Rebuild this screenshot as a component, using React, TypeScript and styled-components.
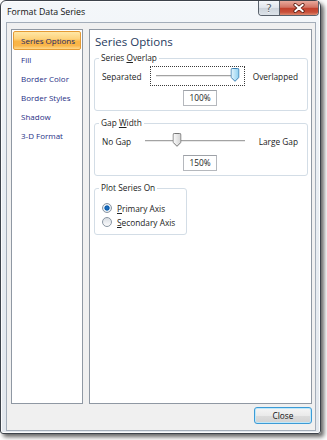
import React from "react";
import styled, { createGlobalStyle } from "styled-components";

const Global = createGlobalStyle`
  html, body { margin: 0; padding: 0; background: #fdfdfd; }
  body { width: 327px; height: 440px; overflow: hidden; font-family: "Open Sans", "Noto Sans", sans-serif; }
  #root { width: 327px; height: 440px; }
  * { box-sizing: border-box; }
`;

const Stage = styled.div`
  width: 327px;
  height: 440px;
  background: #fdfdfd;
`;

const Win = styled.div`
  width: 321px;
  height: 434px;
  border: 1px solid #3d434b;
  border-radius: 6px 6px 3px 3px;
  background: linear-gradient(180deg, #f4f7fa 0%, #e9eef3 40%, #e3e8ee 100%);
  box-shadow: 3px 3px 4px rgba(0, 0, 0, 0.6), inset 0 0 0 1px rgba(255, 255, 255, 0.85);
  display: flex;
  flex-direction: column;
  padding: 0 4px 2px 5px;
`;

const TitleBar = styled.div`
  height: 21px;
  margin: 0 -3px 0 -5px;
  padding-left: 6px;
  display: flex;
  align-items: flex-start;
`;

const Title = styled.div`
  flex: 1;
  font-size: 8.8px;
  line-height: 22px;
  color: #111;
`;

const CaptionGroup = styled.div`
  display: flex;
  height: 15px;
  border: 1px solid #59616b;
  border-top: none;
  border-radius: 0 0 4px 4px;
  overflow: hidden;
`;

const HelpBtn = styled.div`
  width: 21px;
  display: flex;
  align-items: center;
  justify-content: center;
  border-right: 1px solid #59616b;
  background: linear-gradient(180deg, #f4f6f9 0%, #dfe4ea 50%, #ccd3db 51%, #dde3e9 100%);
  color: #5b626b;
  font-size: 11px;
  font-family: "DejaVu Sans", sans-serif;
  line-height: 1;
  text-shadow: 0 1px 0 #fff;
`;

const CloseCap = styled.div`
  width: 38px;
  display: flex;
  align-items: center;
  justify-content: center;
  background: linear-gradient(180deg, #e9a99c 0%, #d27464 45%, #c2412d 52%, #c9503a 80%, #dc8a70 100%);
`;

const Client = styled.div`
  flex: 1;
  min-height: 0;
  border: 1px solid #a3adb9;
  background: #f0f0f0;
  display: flex;
  flex-direction: column;
  padding: 6px 3px 6px 4px;
`;

const Main = styled.div`
  flex: 1;
  min-height: 0;
  display: flex;
  gap: 6px;
`;

const Nav = styled.div`
  width: 72px;
  border: 1px solid #8f98a3;
  background: #fff;
  padding: 1px;
  display: flex;
  flex-direction: column;
`;

const NavItem = styled.div<{ $selected?: boolean }>`
  height: 19px;
  padding-left: 7px;
  display: flex;
  align-items: center;
  font-size: 8px;
  white-space: nowrap;
  color: ${(p) => (p.$selected ? "#1b2a66" : "#1f2f86")};
  border: 1px solid ${(p) => (p.$selected ? "#e59b34" : "transparent")};
  border-radius: 2px;
  background: ${(p) =>
    p.$selected
      ? "linear-gradient(180deg, #ffe7a6 0%, #fdd27c 40%, #fab545 55%, #f9b54a 80%, #fed98a 100%)"
      : "transparent"};
`;

const Panel = styled.div`
  flex: 1;
  border: 1px solid #8f98a3;
  background: #fff;
  padding: 4px 3px 0 4px;
  display: flex;
  flex-direction: column;
  align-items: flex-start;
`;

const Heading = styled.div`
  font-size: 11.5px;
  line-height: 16px;
  color: #1f3a5e;
  padding-left: 1px;
  margin-bottom: 2px;
`;

const Group = styled.fieldset<{ $width?: number; $padTop: number; $padBottom: number }>`
  margin: 0 0 6px 0;
  padding: ${(p) => p.$padTop}px 9px ${(p) => p.$padBottom}px 7px;
  border: 1px solid #d3dde6;
  border-radius: 3px;
  min-width: 0;
  width: ${(p) => (p.$width ? `${p.$width}px` : "100%")};
  display: flex;
  flex-direction: column;
`;

const Legend = styled.legend`
  font-size: 8.3px;
  line-height: 12px;
  padding: 0 2px;
  margin-left: -3px;
  color: #222;
`;

const SliderRow = styled.div`
  height: 20px;
  display: flex;
  align-items: center;
  gap: 8px;
`;

const SliderLabel = styled.span`
  font-size: 8.3px;
  color: #222;
  white-space: nowrap;
`;

const Slider = styled.div<{ $focused?: boolean }>`
  flex: 1;
  height: 20px;
  padding: 0 5px;
  display: flex;
  align-items: center;
  border: 1px ${(p) => (p.$focused ? "dotted #3a3a3a" : "solid transparent")};
`;

const Track = styled.div`
  position: relative;
  flex: 1;
  height: 2px;
  border-top: 1px solid #a3a3a3;
  border-bottom: 1px solid #e8e8e8;
`;

const ThumbLane = styled.div`
  position: absolute;
  left: 4px;
  right: 4px;
  top: -8px;
  height: 14px;
`;

const ThumbWrap = styled.div`
  position: absolute;
  top: 0;
  width: 9px;
  height: 14px;
  transform: translateX(-50%);
  display: flex;
`;

const ValueBox = styled.div`
  align-self: center;
  margin-top: 4px;
  width: 34px;
  height: 16px;
  border: 1px solid #b5b8bd;
  border-top-color: #9da1a7;
  background: #fff;
  font-size: 8.3px;
  line-height: 14px;
  text-align: center;
  color: #222;
`;

const RadioRow = styled.label`
  height: 14px;
  display: flex;
  align-items: center;
  gap: 5px;
  font-size: 8.3px;
  color: #222;
  white-space: nowrap;
`;

const RadioDot = styled.span<{ $checked?: boolean }>`
  width: 10px;
  height: 10px;
  border-radius: 50%;
  border: 1px solid #8a96a3;
  background: ${(p) =>
    p.$checked
      ? "radial-gradient(circle at 50% 50%, #1f73c4 0, #0e5aa8 2.2px, #6aa7dc 2.6px, #eef1f4 3px, #d6dbe1 100%)"
      : "linear-gradient(180deg, #d9dde2 0%, #eef0f3 60%, #fafafa 100%)"};
`;

const ButtonRow = styled.div`
  display: flex;
  justify-content: flex-end;
  margin-top: 3px;
`;

const Button = styled.div`
  width: 58px;
  height: 17px;
  border: 1px solid #3c9bd6;
  border-radius: 3px;
  box-shadow: inset 0 0 0 1px #bfe8fa;
  background: linear-gradient(180deg, #f5f5f5 0%, #eaeaea 50%, #dcdcdc 51%, #d2d2d2 100%);
  display: flex;
  align-items: center;
  justify-content: center;
  font-size: 8.3px;
  color: #111;
`;

function Thumb({ active }: { active?: boolean }) {
  const id = active ? "thumbA" : "thumbB";
  return (
    <svg width="9" height="14" viewBox="0 0 9 14">
      <defs>
        <linearGradient id={id} x1="0" x2="1" y1="0" y2="0">
          <stop offset="0" stopColor={active ? "#e6f6fd" : "#fbfbfb"} />
          <stop offset="1" stopColor={active ? "#8ccff0" : "#d3d3d3"} />
        </linearGradient>
      </defs>
      <path
        d="M1.8 0.5 H7.2 A1.3 1.3 0 0 1 8.5 1.8 V9.3 L4.5 13.3 L0.5 9.3 V1.8 A1.3 1.3 0 0 1 1.8 0.5 Z"
        fill={`url(#${id})`}
        stroke={active ? "#3c7fb1" : "#747474"}
        strokeWidth="1"
      />
    </svg>
  );
}

function SliderGroup({
  title,
  left,
  right,
  pct,
  value,
  focused,
}: {
  title: React.ReactNode;
  left: string;
  right: string;
  pct: number;
  value: string;
  focused?: boolean;
}) {
  return (
    <Group $padTop={2} $padBottom={4}>
      <Legend>{title}</Legend>
      <SliderRow>
        <SliderLabel>{left}</SliderLabel>
        <Slider $focused={focused}>
          <Track>
            <ThumbLane>
              <ThumbWrap style={{ left: `${pct}%` }}>
                <Thumb active={focused} />
              </ThumbWrap>
            </ThumbLane>
          </Track>
        </Slider>
        <SliderLabel>{right}</SliderLabel>
      </SliderRow>
      <ValueBox>{value}</ValueBox>
    </Group>
  );
}

const navItems = ["Series Options", "Fill", "Border Color", "Border Styles", "Shadow", "3-D Format"];

export default function App() {
  return (
    <Stage>
      <Global />
      <Win>
        <TitleBar>
          <Title>Format Data Series</Title>
          <CaptionGroup>
            <HelpBtn>?</HelpBtn>
            <CloseCap>
              <svg width="12" height="10" viewBox="0 0 12 10">
                <path d="M2.2 1.8 L9.8 8.2 M9.8 1.8 L2.2 8.2" stroke="#5a1e14" strokeWidth="3.6" strokeLinecap="round" />
                <path d="M2.2 1.8 L9.8 8.2 M9.8 1.8 L2.2 8.2" stroke="#ffffff" strokeWidth="2" strokeLinecap="round" />
              </svg>
            </CloseCap>
          </CaptionGroup>
        </TitleBar>
        <Client>
          <Main>
            <Nav>
              {navItems.map((n, i) => (
                <NavItem key={n} $selected={i === 0}>
                  {n}
                </NavItem>
              ))}
            </Nav>
            <Panel>
              <Heading>Series Options</Heading>
              <SliderGroup
                title={
                  <>
                    Series <u>O</u>verlap
                  </>
                }
                left="Separated"
                right="Overlapped"
                pct={100}
                value="100%"
                focused
              />
              <SliderGroup
                title={
                  <>
                    Gap <u>W</u>idth
                  </>
                }
                left="No Gap"
                right="Large Gap"
                pct={30}
                value="150%"
              />
              <Group $width={93} $padTop={7} $padBottom={5}>
                <Legend>Plot Series On</Legend>
                <RadioRow>
                  <RadioDot $checked />
                  <span>
                    <u>P</u>rimary Axis
                  </span>
                </RadioRow>
                <RadioRow>
                  <RadioDot />
                  <span>
                    <u>S</u>econdary Axis
                  </span>
                </RadioRow>
              </Group>
            </Panel>
          </Main>
          <ButtonRow>
            <Button>Close</Button>
          </ButtonRow>
        </Client>
      </Win>
    </Stage>
  );
}
